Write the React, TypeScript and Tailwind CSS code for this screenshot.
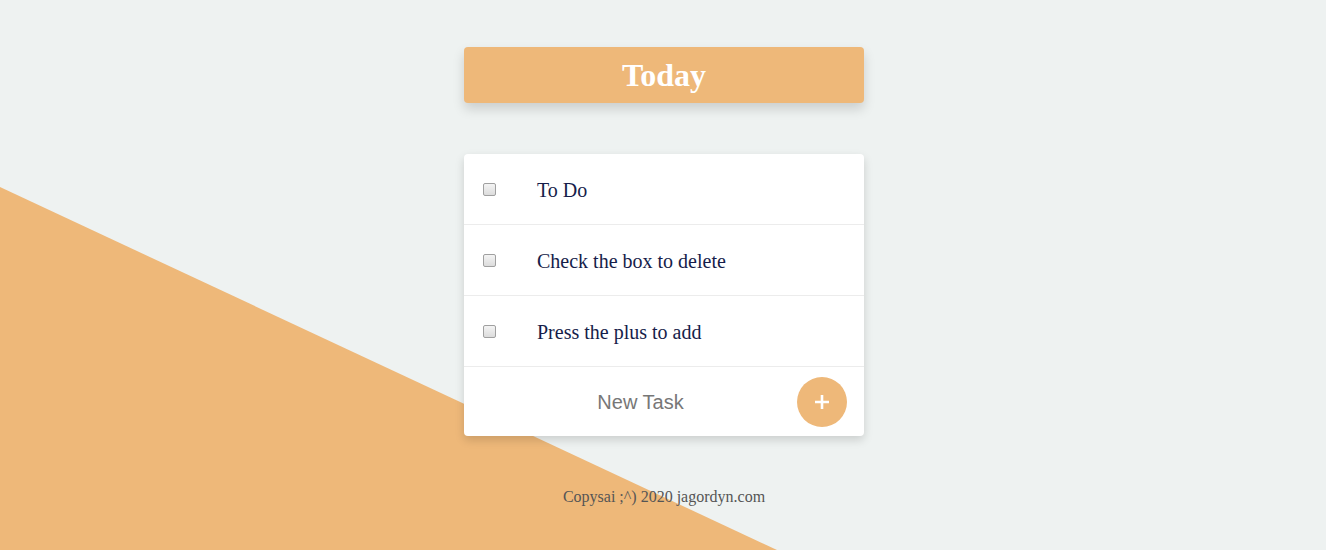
import React from "react";

const tasks = ["To Do", "Check the box to delete", "Press the plus to add"];

export default function App() {
  return (
    <div className="relative h-[550px] w-full overflow-hidden bg-[#eef2f1]">
      <svg
        className="absolute inset-0 h-full w-full"
        viewBox="0 0 1326 550"
        preserveAspectRatio="none"
      >
        <polygon points="0,187 777,550 0,550" fill="#eeb879" />
      </svg>
      <div className="relative flex flex-col items-center pl-[2px] pt-[47px]">
        <div className="flex h-[56px] w-[400px] items-center justify-center rounded bg-[#eeb879] shadow-[0_6px_12px_rgba(0,0,0,0.15)]">
          <span className="text-[32px] font-bold text-white [font-family:'Liberation_Serif',serif]">
            Today
          </span>
        </div>
        <div className="mt-[51px] w-[400px] rounded bg-white shadow-[0_4px_10px_rgba(0,0,0,0.15)]">
          {tasks.map((t) => (
            <div
              key={t}
              className="flex h-[71px] items-center border-b border-[#ececec] pl-[19px]"
            >
              <input
                type="checkbox"
                className="m-0 h-[13px] w-[13px] appearance-none rounded-[2px] border border-[#a0a0a0] bg-gradient-to-b from-[#f4f4f4] to-[#dcdcdc]"
              />
              <span className="ml-[41px] pt-[2px] text-[20px] text-[#161d4a] [font-family:'Liberation_Serif',serif]">
                {t}
              </span>
            </div>
          ))}
          <div className="flex h-[69px] items-center">
            <input
              placeholder="New Task"
              className="min-w-0 flex-1 bg-transparent pl-[20px] text-center text-[20px] outline-none placeholder:text-[#777] [font-family:'Liberation_Sans',sans-serif]"
            />
            <button className="mr-[17px] flex h-[50px] w-[50px] items-center justify-center rounded-full bg-[#eeb879]">
              <svg width="14" height="14" viewBox="0 0 14 14">
                <path d="M7 0v14M0 7h14" stroke="white" strokeWidth="2.6" />
              </svg>
            </button>
          </div>
        </div>
        <p className="mt-[49px] text-[16px] text-[#555] [font-family:'Liberation_Serif',serif]">
          Copysai ;^) 2020 jagordyn.com
        </p>
      </div>
    </div>
  );
}
